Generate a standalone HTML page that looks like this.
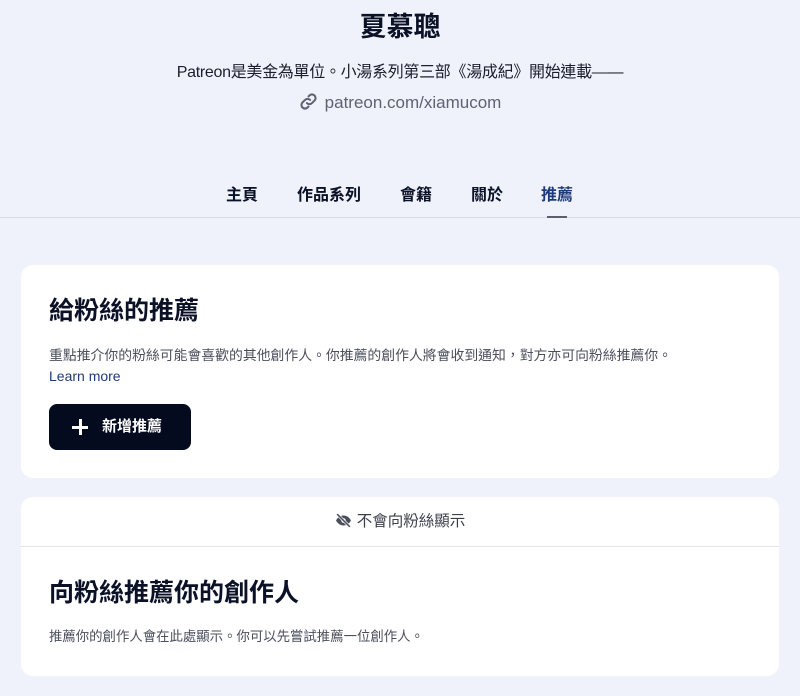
<!DOCTYPE html>
<html><head><meta charset="utf-8"><style>
*{margin:0;padding:0;box-sizing:border-box}
body{width:800px;height:696px;background:#eff2fa;font-family:"Liberation Sans","Noto Sans CJK TC",sans-serif;color:#0b1126;position:relative;overflow:hidden}
.abs{position:absolute}
.c{left:0;width:800px;text-align:center}
.card{position:absolute;left:21px;width:758px;background:#fff;border-radius:12px}
</style></head><body>
<div class="abs c" style="top:10px;font-size:27px;font-weight:700;line-height:34px">夏慕聰</div>
<div class="abs c" style="top:62px;font-size:16px;line-height:22px;color:#1b1f2b;letter-spacing:-0.3px">Patreon是美金為單位。小湯系列第三部《湯成紀》開始連載——</div>
<div class="abs c" style="top:92px;font-size:17px;line-height:22px;color:#5f6370">
<svg width="19" height="19" viewBox="0 0 24 24" style="vertical-align:-3px;margin-right:7px" fill="none" stroke="#5f6370" stroke-width="2.6" stroke-linecap="round"><path d="M10 14a4.5 4.5 0 0 0 6.4 0l3.2-3.2a4.5 4.5 0 0 0-6.4-6.4L12 5.6"/><path d="M14 10a4.5 4.5 0 0 0-6.4 0l-3.2 3.2a4.5 4.5 0 0 0 6.4 6.4L12 18.4"/></svg>patreon.com/xiamucom</div>
<div class="abs" style="top:185px;left:0;width:800px;font-size:16px;font-weight:700;line-height:22px">
<span class="abs" style="left:226px">主頁</span>
<span class="abs" style="left:297px">作品系列</span>
<span class="abs" style="left:400px">會籍</span>
<span class="abs" style="left:471px">關於</span>
<span class="abs" style="left:541px;color:#1f3a7a">推薦</span>
</div>
<div class="abs" style="top:217px;left:0;width:800px;height:1px;background:#d8dbe3"></div>
<div class="abs" style="top:216px;left:547px;width:20px;height:2px;background:#5b5f6c"></div>

<div class="card" style="top:265px;height:213px">
<div class="abs" style="left:28px;top:30px;font-size:25px;font-weight:700;line-height:32px">給粉絲的推薦</div>
<div class="abs" style="left:28px;top:80px;font-size:13.85px;line-height:20px;color:#4b4f5c">重點推介你的粉絲可能會喜歡的其他創作人。你推薦的創作人將會收到通知，對方亦可向粉絲推薦你。</div>
<div class="abs" style="left:28px;top:101px;font-size:14px;line-height:20px;color:#1f3a7a">Learn more</div>
<div class="abs" style="left:28px;top:139px;width:142px;height:46px;background:#050b1e;border-radius:8px;color:#fff;font-size:15px;font-weight:700;line-height:46px;padding-left:53px">新增推薦
<span class="abs" style="left:23px;top:15px;width:16px;height:16px">
<span class="abs" style="left:7px;top:0;width:2.5px;height:16px;background:#fff"></span>
<span class="abs" style="left:0;top:7px;width:16px;height:2.5px;background:#fff"></span></span></div>
</div>

<div class="card" style="top:497px;height:179px">
<div class="abs" style="left:0;top:0;width:758px;height:50px;border-bottom:1px solid #e2e4ea;text-align:center;font-size:15.5px;line-height:50px;color:#3b3f4b">
<svg width="17" height="17" viewBox="0 0 24 24" style="vertical-align:-3px;margin-right:5px"><path d="M12 5C6.5 5 3 9 1.5 12c1.5 3 5 7 10.5 7s9-4 10.5-7C21 9 17.5 5 12 5z" fill="#4a4e5a"/><circle cx="12" cy="12" r="3.2" fill="#fff"/><path d="M3 3l18 18" stroke="#fff" stroke-width="4"/><path d="M3 3l18 18" stroke="#4a4e5a" stroke-width="2.2"/></svg>不會向粉絲顯示</div>
<div class="abs" style="left:28px;top:80px;font-size:25px;font-weight:700;line-height:32px">向粉絲推薦你的創作人</div>
<div class="abs" style="left:28px;top:130px;font-size:13.4px;line-height:20px;color:#4b4f5c">推薦你的創作人會在此處顯示。你可以先嘗試推薦一位創作人。</div>
</div>
</body></html>
